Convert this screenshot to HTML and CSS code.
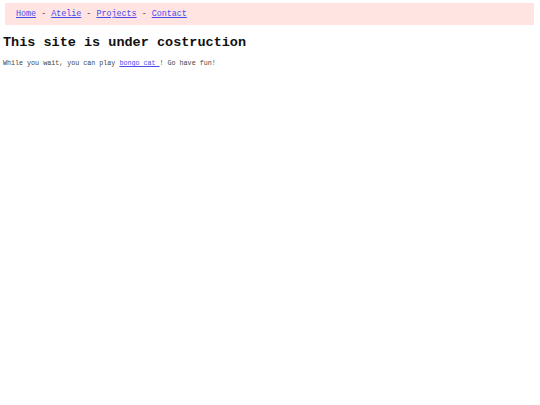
FILE: index.html
```html
<!DOCTYPE html>
<html>
<head>
<meta charset="utf-8">
<link rel="stylesheet" href="styles.css">
</head>
<body>
<nav class="nav">
<a href="#">Home</a> - <a href="#">Atelie</a> - <a href="#">Projects</a> - <a href="#">Contact</a>
</nav>
<h1 class="title">This site is under costruction</h1>
<p class="text">While you wait, you can play <a href="#">bongo cat </a>! Go have fun!</p>
</body>
</html>
```
FILE: styles.css
```css
body {
  margin: 0;
  padding: 3px 3px;
  font-family: "Liberation Mono", "Courier New", monospace;
  color: #000;
  background: #fff;
}
a { color: #4a4aee; }
.nav {
  margin: 0 3px 0 2px;
  height: 22px;
  box-sizing: border-box;
  padding: 0 11px;
  display: flex;
  align-items: center;
  white-space: pre;
  background: #ffe4e1;
  font-size: 8.4px;
  color: #444;
}
.title {
  margin: 10px 0 0 0;
  font-size: 13.5px;
  font-weight: bold;
  color: #111;
}
.text {
  margin: 9px 0 0 0;
  font-size: 6.7px;
  color: #444;
}
```
